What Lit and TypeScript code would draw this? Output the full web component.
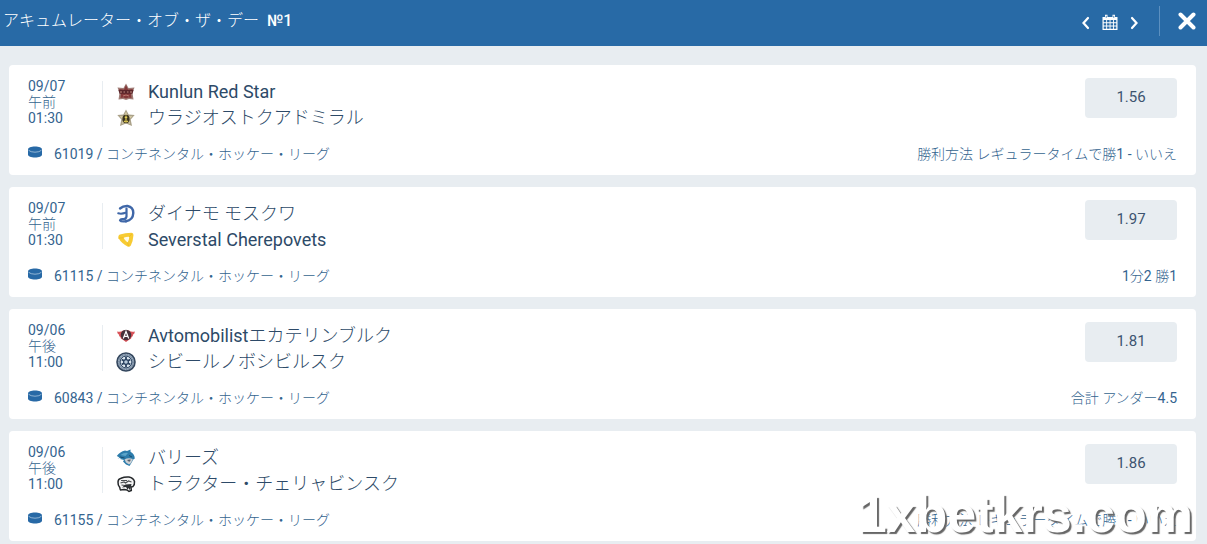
import { LitElement, html, css, svg, TemplateResult } from "lit";
import { customElement, property } from "lit/decorators.js";

interface Team {
  name: string;
  logo: string;
}

interface Match {
  date: string;
  period: string;
  time: string;
  teams: Team[];
  id: string;
  market: string;
  odds: string;
}

const LEAGUE = "コンチネンタル・ホッケー・リーグ";

const MATCHES: Match[] = [
  {
    date: "09/07", period: "午前", time: "01:30",
    teams: [
      { name: "Kunlun Red Star", logo: "kunlun" },
      { name: "ウラジオストクアドミラル", logo: "admiral" },
    ],
    id: "61019", market: "勝利方法 レギュラータイムで勝1 - いいえ", odds: "1.56",
  },
  {
    date: "09/07", period: "午前", time: "01:30",
    teams: [
      { name: "ダイナモ モスクワ", logo: "dynamo" },
      { name: "Severstal Cherepovets", logo: "severstal" },
    ],
    id: "61115", market: "1分2 勝1", odds: "1.97",
  },
  {
    date: "09/06", period: "午後", time: "11:00",
    teams: [
      { name: "Avtomobilistエカテリンブルク", logo: "avto" },
      { name: "シビールノボシビルスク", logo: "sibir" },
    ],
    id: "60843", market: "合計 アンダー4.5", odds: "1.81",
  },
  {
    date: "09/06", period: "午後", time: "11:00",
    teams: [
      { name: "バリーズ", logo: "barys" },
      { name: "トラクター・チェリャビンスク", logo: "traktor" },
    ],
    id: "61155", market: "勝利方法 レギュラータイムで勝1 - いいえ", odds: "1.86",
  },
];

const LOGOS: Record<string, TemplateResult> = {
  kunlun: svg`
    <path d="M10 1.500l2.500 4.500 6-.5-2 5.500 1 6.500-4.500-.5-3 1-3-1-4.500.5 1-6.500-2-5.500 6 .5z" fill="#a07c76"/>
    <path d="M10 3l2 4.500 5-.5-2 4.500.5 4.500-3-.500-2.500 1-2.500-1-3 .500.5-4.500-2-4.500 5 .500z" fill="#85393a"/>
    <path d="M2.500 8h15l-1 3.800h-13z" fill="#5a262b"/>
    <path d="M4 10h2M7.500 10h1.500M11 10h1.500M14 10h2" stroke="#c08a80" stroke-width="1.200"/>
    <path d="M7 14l3-1 3 1" stroke="#b87a70" fill="none"/>`,
  admiral: svg`
    <path d="M10 1.500l2.700 5 6 .500-4 4.500 1.300 6.500-6-2.500-6 2.500 1.300-6.500-4-4.500 6-.500z" fill="#aaa189"/>
    <path d="M10 3.500l1.800 4.400 4.700.300-3.500 3.300 1.100 4.500L10 14l-4.100 2 1.100-4.500-3.500-3.300 4.700-.300z" fill="#d6cca6"/>
    <ellipse cx="10" cy="11" rx="3.600" ry="4.200" fill="#39331f"/>
    <path d="M10 7.500v5.500M8 13q2 1.600 4 0M8.700 9.300h2.600" stroke="#e3cd55" stroke-width="1.200" fill="none"/>`,
  dynamo: svg`
    <path d="M4 4.500Q7 1.800 11.500 2 17.300 3 17.300 9 17 16 10 17.300" fill="none" stroke="#3f67a8" stroke-width="2.400" stroke-linecap="round"/>
    <path d="M10.500 4.500v8Q10 15.500 7 15.200q-2.500-.4-3 1.200 1 1.600 6 .9" fill="none" stroke="#3f67a8" stroke-width="2.200" stroke-linecap="round" stroke-linejoin="round"/>
    <path d="M2.200 9.300Q5.500 10.300 9.500 8.800" fill="none" stroke="#3f67a8" stroke-width="2" stroke-linecap="round"/>`,
  severstal: svg`
    <path d="M4 4.500Q9 2.800 15.500 2.800q2 .2 2 2.200-.5 6.500-2.700 10.500-1.300 2-3.300 1Q5.500 13.300 2.500 8.300 1.800 5.500 4 4.500z" fill="#f7cb33"/>
    <path d="M7.500 7.700q3-1.200 5.800-1-.2 3.500-1.700 5.800-2.500-1.700-4.100-4.800z" fill="#fffbe8"/>
    <path d="M2.700 8l5-.300M13 7l3-3.300M11.500 12.500l1 3.500" stroke="#efb920" stroke-width=".8"/>`,
  avto: svg`
    <path d="M1 5.500q4 .700 6-1h6q2 1.700 6 1-.5 2.500-2 3 .5 1.700-1.500 2.700 0 1.700-2 2.300L10 16l-3.500-2.500q-2-.6-2-2.300-2-1-1.500-2.700-1.500-.5-2-3z" fill="#d9545a"/>
    <circle cx="10" cy="9" r="5.300" fill="#46313a"/>
    <path d="M7.300 12.500L10 5.500l2.700 7M8 10.300h4" stroke="#fff" stroke-width="1.200" fill="none"/>`,
  sibir: svg`
    <circle cx="10" cy="10" r="9" fill="#9fb0c2" stroke="#33465d" stroke-width="1.600"/>
    <circle cx="10" cy="10" r="7.300" fill="none" stroke="#62778e" stroke-width="1" stroke-dasharray="1.500 1"/>
    <circle cx="10" cy="10" r="5.900" fill="#dce6ee" stroke="#28405e" stroke-width="1"/>
    <path d="M10 5v10M5.700 7.500l8.600 5M5.700 12.500l8.600-5" stroke="#28405e" stroke-width="1.800"/>
    <circle cx="10" cy="10" r="2.400" fill="#b7cadb" stroke="#28405e" stroke-width="1.200"/>`,
  barys: svg`
    <path d="M.8 8Q4 3.500 9 2.500l2 .5 3.500-1.500v2.300q4 2.200 4.300 6.700l-1.800 1.200-1 2.300-2.500 4-3.500-1.500-3-3 1-1.500-4-1 1-1.300L1.500 10.500l2-1z" fill="#2c7cab"/>
    <path d="M4.500 7Q8 4.300 12 5L9.500 8z" fill="#5ba5ca"/>
    <path d="M8.500 11.500q3.500-2 8.300-.5l-1.600 4-2.200 1.500-3-2z" fill="#c9ced3"/>
    <path d="M11 12q2.500-.7 4-.2l-1.800 2.200z" fill="#59626b"/>
    <path d="M13 7.500l3 1.500M4 9l4.500 1" stroke="#174766" stroke-width=".9"/>`,
  traktor: svg`
    <path d="M2 8q0-3 3-3.800Q9 2.500 13 3q4.500 1 5.500 4.500.3 3.500-1.500 5l-2 .5.3 3.500-2.300 1-2-1.500-3-.5-3.500.5Q4 15.500 3.800 13.500 1.700 11 2 8z" fill="#f4f4f4" stroke="#25282b" stroke-width="1.500"/>
    <path d="M5 6.500h6M4.500 9L8 8l1.500 1 3-2 3 1M5.500 11l3.500.5" fill="none" stroke="#4a4d50" stroke-width="1.200"/>
    <path d="M9.500 10.500l6-.5-.5 2.500-1.300 3.500-1.200-2-1 1.500-1.500-2.500-4 .5z" fill="#2b2e32"/>`,
};

@customElement("team-row")
class TeamRow extends LitElement {
  @property() name = "";
  @property() logo = "";

  static styles = css`
    :host {
      display: flex;
      align-items: center;
      gap: 12px;
      height: 26px;
      font-size: 18px;
      color: #2d4a68;
    }
    .logo {
      flex: none;
      width: 20px;
      height: 20px;
    }
  `;

  render() {
    return html`<svg class="logo" viewBox="0 0 20 20" aria-hidden="true">${LOGOS[this.logo]}</svg>
      <span>${this.name}</span>`;
  }
}

@customElement("match-card")
class MatchCard extends LitElement {
  @property({ attribute: false }) match!: Match;

  static styles = css`
    :host {
      display: block;
      padding: 13px 19px;
      border-radius: 4px;
      background: #fff;
      color: #34648f;
      font-size: 14px;
      line-height: 16px;
    }
    .main {
      display: flex;
      align-items: flex-start;
    }
    .when {
      width: 74px;
      display: flex;
      flex-direction: column;
    }
    .rule {
      align-self: stretch;
      width: 1px;
      margin: 3px 0 4px;
      background: #e8edf1;
    }
    .teams {
      flex: 1;
      min-width: 0;
      padding: 1px 0 0 13px;
    }
    .odds {
      flex: none;
      width: 92px;
      height: 40px;
      padding: 0 0 2px;
      border: 0;
      border-radius: 4px;
      background: #e8edf1;
      color: #3c5470;
      font: inherit;
      font-size: 15px;
      cursor: pointer;
    }
    .info {
      display: flex;
      align-items: center;
      margin-top: 15px;
    }
    .puck {
      flex: none;
      width: 14px;
      height: 12px;
      margin-right: 12px;
      margin-bottom: 4px;
    }
    .league {
      flex: 1;
    }
  `;

  render() {
    const m = this.match;
    return html`
      <div class="main">
        <div class="when"><span>${m.date}</span><span>${m.period}</span><span>${m.time}</span></div>
        <div class="rule"></div>
        <div class="teams">
          ${m.teams.map((t) => html`<team-row .name=${t.name} .logo=${t.logo}></team-row>`)}
        </div>
        <button class="odds" type="button">${m.odds}</button>
      </div>
      <div class="info">
        <svg class="puck" viewBox="0 0 14 12" aria-hidden="true">
          <path d="M0 3.500C0 1.500 3 .500 7 .500s7 1 7 3V8.500c0 2-3 3-7 3s-7-1-7-3z" fill="#2769a6" />
          <path d="M.5 4.200Q2.500 6.200 7 6.200t6.500-2" fill="none" stroke="#a9c6df" stroke-width=".8" />
        </svg>
        <span class="league">${m.id} / ${LEAGUE}</span>
        <span>${m.market}</span>
      </div>
    `;
  }
}

@customElement("app-root")
class AppRoot extends LitElement {
  static styles = css`
    :host {
      display: block;
      position: relative;
      box-sizing: border-box;
      height: 100vh;
      overflow: hidden;
      background: #e8edf1;
      font-family: Roboto, "Noto Sans CJK JP Light", "Noto Sans CJK JP", sans-serif;
    }
    .bar {
      display: flex;
      align-items: center;
      height: 46px;
      padding: 0 11px 0 3px;
      background: #286aa6;
      color: #fff;
    }
    .title {
      flex: 1;
      display: flex;
      gap: 8px;
      margin: 0 0 5px;
      font-size: 16px;
      line-height: 20px;
      font-weight: 400;
    }
    .number {
      font-weight: 500;
    }
    .icon {
      display: flex;
      padding: 0;
      border: 0;
      background: none;
      color: inherit;
      cursor: pointer;
    }
    .nav {
      display: flex;
      align-items: center;
      gap: 12px;
      padding-right: 20px;
    }
    .close {
      padding: 6px 0 6px 18px;
      margin-bottom: 4px;
      border-left: 1px solid #5c90c0;
    }
    .list {
      display: grid;
      gap: 12px;
      margin: 0;
      padding: 19px 11px 12px 9px;
      list-style: none;
    }
    .mark {
      position: absolute;
      right: 14px;
      bottom: 2px;
      font: 700 52px/56px "Liberation Sans", Arial, sans-serif;
      color: #fff;
      text-shadow: 2px 2px 1px #666;
      pointer-events: none;
    }
  `;

  render() {
    return html`
      <header class="bar">
        <h1 class="title" lang="ja"><span>アキュムレーター・オブ・ザ・デー</span><span class="number">№1</span></h1>
        <div class="nav">
          <button class="icon" type="button" aria-label="前へ">
            <svg width="9" height="14" viewBox="0 0 9 14"><path d="M7 2L2.500 7 7 12" fill="none" stroke="currentColor" stroke-width="2.200" stroke-linecap="round" /></svg>
          </button>
          <button class="icon" type="button" aria-label="カレンダー">
            <svg width="16" height="18" viewBox="0 0 16 18">
              <path d="M.5 3h15v13H.5z" fill="currentColor" />
              <path d="M1.700 6h2.500v2.300H1.700zM5.100 6h2.500v2.300H5.100zM8.500 6h2.500v2.300H8.500zM11.900 6h2.400v2.300h-2.400zM1.700 9.200h2.500v2.300H1.700zM5.100 9.200h2.500v2.300H5.100zM8.500 9.200h2.500v2.300H8.500zM11.900 9.200h2.400v2.300h-2.400zM1.700 12.500h2.500v2.300H1.700zM5.100 12.500h2.500v2.300H5.100zM8.500 12.500h2.500v2.300H8.500zM11.900 12.500h2.400v2.300h-2.400z" fill="#286aa6" />
              <path d="M3 .8h2.500v4H3zM10.500.8H13v4h-2.500z" fill="currentColor" />
              <path d="M4.250 1.800v2M11.750 1.800v2" stroke="#286aa6" stroke-width=".8" />
            </svg>
          </button>
          <button class="icon" type="button" aria-label="次へ">
            <svg width="9" height="14" viewBox="0 0 9 14"><path d="M2 2l4.500 5L2 12" fill="none" stroke="currentColor" stroke-width="2.200" stroke-linecap="round" /></svg>
          </button>
        </div>
        <button class="icon close" type="button" aria-label="閉じる">
          <svg width="18" height="18" viewBox="0 0 18 18"><path d="M2.500 2.500l13 13M15.500 2.500l-13 13" stroke="currentColor" stroke-width="4" stroke-linecap="round" /></svg>
        </button>
      </header>
      <ul class="list" lang="ja">
        ${MATCHES.map((m) => html`<li><match-card .match=${m}></match-card></li>`)}
      </ul>
      <div class="mark">1xbetkrs.com</div>
    `;
  }
}
